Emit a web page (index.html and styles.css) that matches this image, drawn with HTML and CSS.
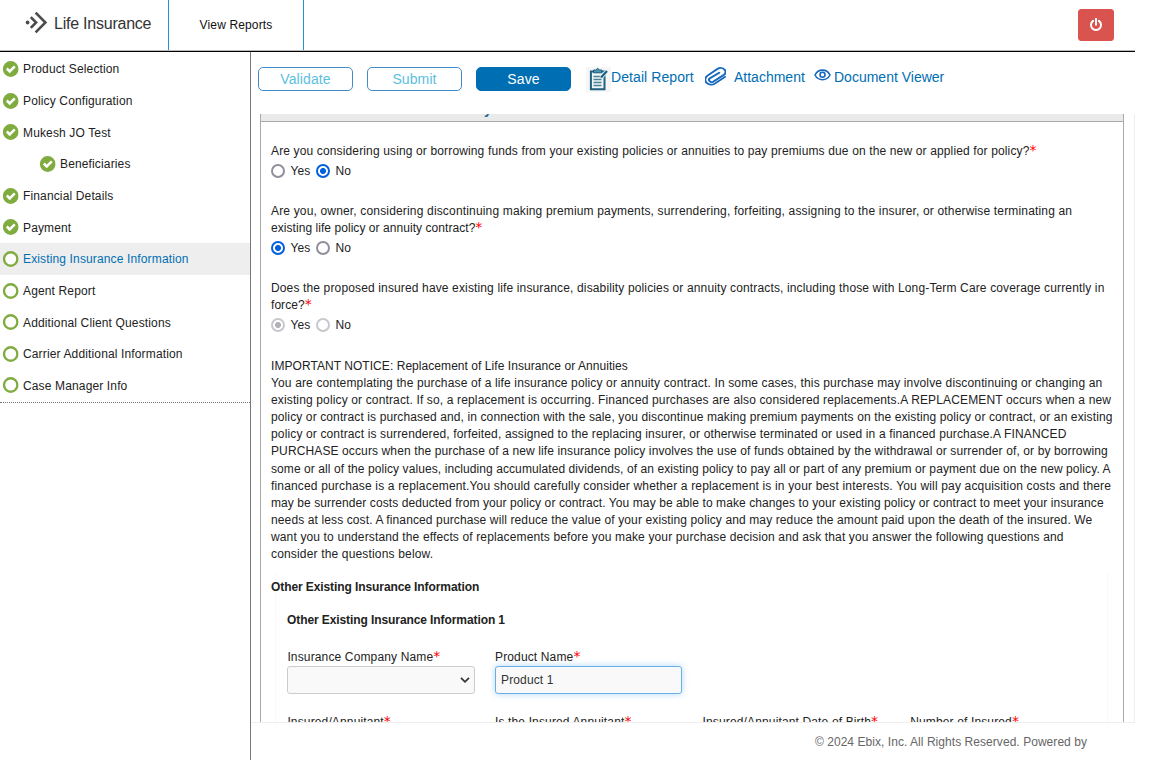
FILE: index.html
```html
<!DOCTYPE html>
<html lang="en">
<head>
<meta charset="utf-8">
<title>Life Insurance</title>
<link rel="stylesheet" href="styles.css">
</head>
<body>
<svg class="defs" width="0" height="0">
  <symbol id="done" viewBox="0 0 16 16"><circle cx="8" cy="8" r="7.9" fill="#80ac3f"/><path d="M4.1 7.5 7 10.4l5.1-5.1" fill="none" stroke="#fff" stroke-width="2.5"/></symbol>
  <symbol id="open" viewBox="0 0 16 16"><circle cx="8" cy="8" r="6.7" fill="#fff" stroke="#80ac3f" stroke-width="2.4"/></symbol>
</svg>
<div class="page">
  <header class="header">
    <div class="brand">
      <svg width="23" height="24" viewBox="0 0 23 24" fill="none" stroke="#4c4c4c" stroke-width="2.6"><circle cx="2.6" cy="11.5" r="1.9" fill="#4c4c4c" stroke="none"/><path d="M5.8 6.2 11.1 11.5 5.8 16.8"/><path d="M10.6 1.7 20.4 11.5 10.6 21.3"/></svg>
      <span>Life Insurance</span>
    </div>
    <a class="reports">View Reports</a>
    <button class="power" aria-label="Log out"><svg width="14" height="14" viewBox="0 0 14 14" fill="none" stroke="#fff" stroke-width="2"><path d="M4.1 2.9a5 5 0 1 0 5.8 0M7 .8v6" stroke-linecap="round"/></svg></button>
  </header>
  <div class="main">
    <nav class="nav">
      <a><svg><use href="#done"/></svg><span>Product Selection</span></a>
      <a><svg><use href="#done"/></svg><span>Policy Configuration</span></a>
      <a><svg><use href="#done"/></svg><span>Mukesh JO Test</span></a>
      <a class="sub"><svg><use href="#done"/></svg><span>Beneficiaries</span></a>
      <a><svg><use href="#done"/></svg><span>Financial Details</span></a>
      <a><svg><use href="#done"/></svg><span>Payment</span></a>
      <a class="current"><svg><use href="#open"/></svg><span>Existing Insurance Information</span></a>
      <a><svg><use href="#open"/></svg><span>Agent Report</span></a>
      <a><svg><use href="#open"/></svg><span>Additional Client Questions</span></a>
      <a><svg><use href="#open"/></svg><span>Carrier Additional Information</span></a>
      <a><svg><use href="#open"/></svg><span>Case Manager Info</span></a>
    </nav>
    <main class="content">
      <div class="toolbar">
        <button class="btn">Validate</button>
        <button class="btn">Submit</button>
        <button class="btn primary">Save</button>
        <a class="tool detail"><svg width="25" height="25" viewBox="0 0 25 25"><path fill="#f6f6f6" d="M0 0h25v25H0z"/><path d="M4.9 4.4h13.6v17.8H4.9z" fill="#edf5f7" stroke="#1d6080" stroke-width="2"/><path d="M7.5 3h2.2l2-1.6 2 1.6h2.2v2.8H7.5z" fill="#4b90ad" stroke="#1d6080"/><path d="M7.5 9.5h8M7.5 12.5h8M7.5 15.5h8M7.5 18.5h8" stroke="#4b8196" stroke-width="1.4"/><path d="m15 10.5 6-6.5" stroke="#edf5f7" stroke-width="4"/><path d="m15 10.5 6-6.5" stroke="#1d6080" stroke-width="2.2"/></svg>Detail Report</a>
        <a class="tool attach"><svg width="21" height="19" viewBox="1.3 .6 21.2 22.4" preserveAspectRatio="none" fill="none" stroke="#1667bd" stroke-width="2.1" stroke-linecap="round"><path d="m21.44 11.05-9.19 9.19a6 6 0 0 1-8.49-8.49l9.19-9.19a5 5 0 0 1 6.9 0q3.2 3 0 6.6l-9.6 9a2.6 2.6 0 0 1-3.67-3.67l8.49-7.6" transform="rotate(7 12 12)"/></svg>Attachment</a>
        <a class="tool viewer"><svg width="17" height="12" viewBox="0 0 17 12" fill="none" stroke="#1667bd" stroke-width="1.6"><path d="M1 6C4.3-.5 12.7-.5 16 6 12.7 12.3 4.3 12.3 1 6Z"/><circle cx="8.5" cy="5.8" r="2.5"/></svg>Document Viewer</a>
      </div>
      <div class="scroller">
        <section class="panel">
          <div class="panel-head"><span>y</span></div>
          <div class="panel-body">
            <div class="question q1">
              <p>Are you considering using or borrowing funds from your existing policies or annuities to pay premiums due on the new or applied for policy?<i>*</i></p>
              <div class="choices"><label><b class="radio"></b>Yes</label><label><b class="radio on"></b>No</label></div>
            </div>
            <div class="question q2">
              <p><span class="wide">Are you, owner, considering discontinuing making premium payments, surrendering, forfeiting, assigning to the insurer, or otherwise terminating an</span><br><span class="tight">existing life policy or annuity contract?</span><i>*</i></p>
              <div class="choices"><label><b class="radio on"></b>Yes</label><label><b class="radio"></b>No</label></div>
            </div>
            <div class="question q3">
              <p>Does the proposed insured have existing life insurance, disability policies or annuity contracts, including those with Long-Term Care coverage currently in<br><span class="tight">force?</span><i>*</i></p>
              <div class="choices"><label><b class="radio on off"></b>Yes</label><label><b class="radio off"></b>No</label></div>
            </div>
            <p class="notice"><span class="tight">IMPORTANT NOTICE: Replacement of Life Insurance or Annuities</span><br>You are contemplating the purchase of a life insurance policy or annuity contract. In some cases, this purchase may involve discontinuing or changing an<br>existing policy or contract. If so, a replacement is occurring. Financed purchases are also considered replacements.A REPLACEMENT occurs when a new<br><span class="snug">policy or contract is purchased and, in connection with the sale, you discontinue making premium payments on the existing policy or contract, or an existing</span><br>policy or contract is surrendered, forfeited, assigned to the replacing insurer, or otherwise terminated or used in a financed purchase.A FINANCED<br><span class="snug">PURCHASE occurs when the purchase of a new life insurance policy involves the use of funds obtained by the withdrawal or surrender of, or by borrowing</span><br><span class="close">some or all of the policy values, including accumulated dividends, of an existing policy to pay all or part of any premium or payment due on the new policy. A</span><br><span class="wide">financed purchase is a replacement.You should carefully consider whether a replacement is in your best interests. You will pay acquisition costs and there</span><br><span class="close">may be surrender costs deducted from your policy or contract. You may be able to make changes to your existing policy or contract to meet your insurance</span><br><span class="snug">needs at less cost. A financed purchase will reduce the value of your existing policy and may reduce the amount paid upon the death of the insured. We</span><br>want you to understand the effects of replacements before you make your purchase decision and ask that you answer the following questions and<br><span class="wide">consider the questions below.</span></p>
            <div class="group">
              <h2>Other Existing Insurance Information</h2>
              <h3>Other Existing Insurance Information 1</h3>
              <div class="fields">
                <div><label>Insurance Company Name<i>*</i></label><div class="input select"><svg width="10" height="6" viewBox="0 0 10 6" fill="none" stroke="#333" stroke-width="1.7"><path d="m1 .8 4 4 4-4"/></svg></div></div>
                <div><label>Product Name<i>*</i></label><div class="input focus">Product 1</div></div>
              </div>
              <div class="fields more">
                <label>Insured/Annuitant<i>*</i></label>
                <label>Is the Insured Annuitant<i>*</i></label>
                <label>Insured/Annuitant Date of Birth<i>*</i></label>
                <label>Number of Insured<i>*</i></label>
              </div>
            </div>
          </div>
        </section>
      </div>
      <footer class="footer">© 2024 Ebix, Inc. All Rights Reserved. Powered by</footer>
    </main>
  </div>
</div>
</body>
</html>
```
FILE: styles.css
```css
* { box-sizing: border-box; }
body { margin: 0; background: #fff; color: #222; font: 12px/17.15px "Liberation Sans", Arial, sans-serif; letter-spacing: .14px; overflow: hidden; }
p, h2, h3 { margin: 0; }
a { color: inherit; text-decoration: none; }
i { color: #f00; font: 14px/1px "DejaVu Sans", sans-serif; letter-spacing: 0; }
.tight { letter-spacing: .055px; }
.close { letter-spacing: .085px; }
.snug { letter-spacing: .118px; }
.wide { letter-spacing: .165px; }
.defs { position: absolute; }
.page { width: 1135px; height: 760px; display: flex; flex-direction: column; }
.header { height: 52px; flex: none; display: flex; border-bottom: 1px solid #000; box-shadow: inset 0 -1px #bbb; }
.brand { width: 169px; height: 50px; border-right: 1px solid #1f93d1; padding: 0 0 5px 25px; display: flex; align-items: center; gap: 6px; font-size: 16px; letter-spacing: -.23px; color: #333; white-space: nowrap; }
.brand span { padding-top: 2px; }
.reports { width: 135px; height: 50px; line-height: 50px; text-align: center; border-right: 1px solid #1f93d1; color: #111; }
.power { margin: 9px 21px 0 auto; width: 36px; height: 32px; padding: 0; border: 1px solid #d9534f; border-radius: 3px; background: #d9534f; display: flex; align-items: center; justify-content: center; }
.main { flex: 1; min-height: 0; display: flex; }
.nav { width: 251px; border-right: 1px solid #777; padding-top: 1px; }
.nav a { height: 31.7px; display: flex; align-items: center; gap: 4px; padding-left: 3px; }
.nav a.sub { padding-left: 40px; }
.nav svg { width: 16px; height: 16px; transform: translateX(-.3px); }
.nav span { padding-top: 2px; }
.nav a.current { background: #eee; color: #006eb3; }
.nav a:last-child { height: 33px; padding-bottom: 1px; border-bottom: 1px dotted #777; }
.content { width: 884px; display: flex; flex-direction: column; }
.toolbar { height: 62px; flex: none; padding: 15px 0 0 7px; display: flex; align-items: flex-start; }
.btn { width: 95px; height: 24px; margin-right: 14px; padding: 0; font: 14px/22px "Liberation Sans", Arial, sans-serif; letter-spacing: .1px; color: #5bc0de; background: #fff; border: 1px solid #428bca; border-radius: 5px; }
.btn.primary { color: #fff; background: #006eb3; border-color: #006eb3; }
.tool { display: flex; font-size: 14px; line-height: 21px; letter-spacing: 0; color: #006eb3; white-space: nowrap; }
.detail { margin-left: 1px; width: 119px; letter-spacing: .08px; }
.attach { width: 109px; gap: 8px; }
.viewer { gap: 3px; }
.viewer svg { margin-top: 2px; }
.scroller { height: 609px; overflow: hidden; border: solid #eee; border-width: 0 1px 1px 0; padding: 0 10px 0 9px; }
.panel { width: 864px; height: 700px; border: solid #aaa; border-width: 0 1px; }
.panel-head { height: 8px; overflow: hidden; background: #eaeaea; border-bottom: 1px solid #aaa; display: flex; align-items: flex-end; padding-left: 223px; color: #1f6b94; font: bold 14px/14px "Liberation Sans", Arial, sans-serif; }
.panel-head span { margin-bottom: 5px; }
.panel-body { padding: 21px 0 0 10px; white-space: nowrap; }
.question { height: 60px; }
.question.q2 { height: 77px; }
.question.q3 { height: 78px; }
.choices { display: flex; gap: 5.5px; margin-top: 3px; }
.choices label { display: flex; align-items: center; gap: 5.5px; letter-spacing: .1px; }
.radio { width: 14px; height: 14px; margin-top: -2px; border: 2px solid #8f8f9d; border-radius: 50%; background: #fff; }
.radio.on { border-color: #0060df; background: radial-gradient(circle, #0060df 2.6px, #fff 3.4px); }
.radio.off { border-color: #c7c7ce; }
.radio.on.off { background: radial-gradient(circle, #b0b0b9 2.6px, #fff 3.4px); }
.notice { line-height: 17.1px; }
.group { margin: 7.6px 0 0 4px; width: 833px; height: 240px; border: solid #f9f9f9; border-width: 0 1px; padding: 8px 0 0 11px; }
.group h2, .group h3 { font-size: 12px; line-height: 17px; letter-spacing: -.09px; }
.group h2 { margin-left: -16px; }
.group h3 { margin-top: 16px; }
.fields { display: grid; grid-template-columns: repeat(4, 187.6px); column-gap: 20px; margin-top: 20px; }
.fields label { display: block; margin-left: .4px; }
.fields.more { margin-top: 20.6px; }
.input { height: 28px; padding: 0 5.4px; border: 1px solid #ccc; border-radius: 3px; background: #f9f9f9; line-height: 26px; color: #333; }
.select { display: flex; align-items: center; justify-content: flex-end; padding-right: 4px; }
.focus { border-color: #66afe9; box-shadow: 0 0 6px rgba(102, 175, 233, .5); }
.footer { padding: 11px 48px 0 0; text-align: right; color: #666; letter-spacing: .05px; }
```
